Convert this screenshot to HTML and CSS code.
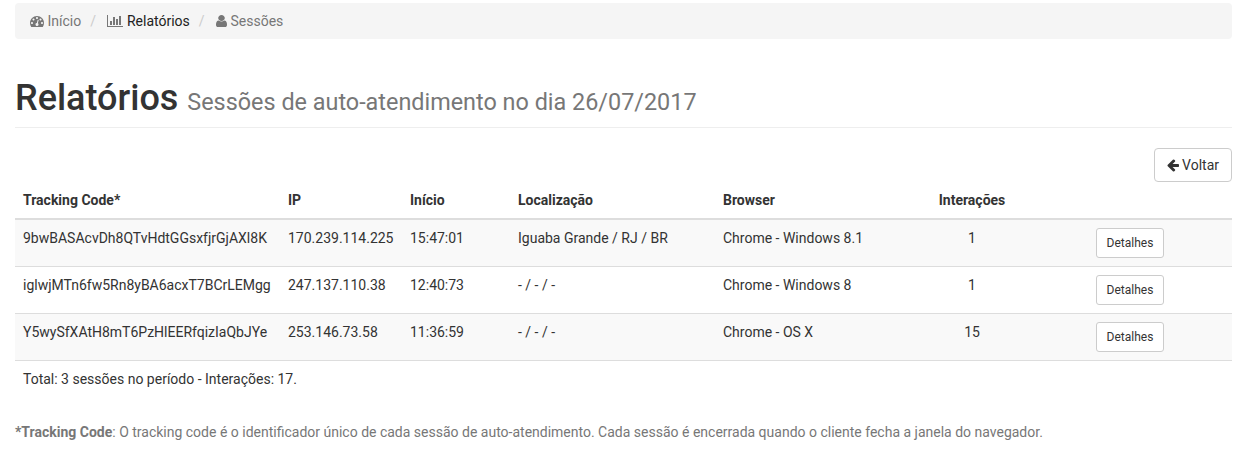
FILE: index.html
```html
<!DOCTYPE html>
<html lang="pt-BR">
<head>
    <meta charset="UTF-8">
    <meta name="viewport" content="width=device-width, initial-scale=1.0">
    <title>Relatórios - Sessões</title>
    <link rel="stylesheet" href="styles.css">
</head>
<body>
    <div class="container">
        <ol class="breadcrumb">
            <li><a href="#"><svg class="icon" width="14" height="14" viewBox="0 0 1792 1792"><path d="M384 1152q0-53-37.500-90.500t-90.500-37.500-90.500 37.500-37.500 90.500 37.500 90.500 90.500 37.500 90.500-37.500 37.500-90.500zm192-448q0-53-37.500-90.500t-90.500-37.500-90.500 37.500-37.500 90.500 37.500 90.500 90.500 37.500 90.500-37.500 37.500-90.500zm428 481l101-382q6-26-7.500-48.500t-38.500-29.500-48 6.500-30 39.500l-101 382q-60 5-107 43.500t-63 98.500q-20 77 20 146t117 89 146-20 89-117q16-60-6-117t-72-91zm660-33q0-53-37.500-90.500t-90.500-37.500-90.500 37.500-37.500 90.500 37.500 90.500 90.500 37.500 90.500-37.500 37.500-90.500zm-640-640q0-53-37.500-90.500t-90.500-37.500-90.500 37.500-37.500 90.500 37.500 90.500 90.500 37.500 90.500-37.500 37.500-90.500zm448 192q0-53-37.500-90.500t-90.500-37.500-90.500 37.500-37.500 90.500 37.500 90.500 90.500 37.500 90.500-37.500 37.500-90.500zm320 448q0 261-141 483-19 29-54 29h-1402q-35 0-54-29-141-221-141-483 0-182 71-348t191-286 286-191 348-71 348 71 286 191 191 286 71 348z"/></svg> Início</a></li>
            <li><svg class="icon" width="16" height="14" viewBox="0 0 2048 1792"><path d="M640 896v512h-256v-512h256zm384-512v1024h-256v-1024h256zm1024 1152v128h-2048v-1536h128v1408h1920zm-640-896v768h-256v-768h256zm384-384v1152h-256v-1152h256z"/></svg> <a href="#" class="current">Relatórios</a></li>
            <li><svg class="icon" width="11" height="14" viewBox="256 0 1280 1792" preserveAspectRatio="none"><path d="M1536 1399q0 109-62.500 187t-150.500 78h-854q-88 0-150.500-78t-62.500-187q0-85 8.500-160.500t31.500-152 58.500-131 94-89 134.500-34.500q131 128 313 128t313-128q76 0 134.500 34.500t94 89 58.500 131 31.500 152 8.500 160.500zm-256-887q0 159-112.500 271.500t-271.500 112.500-271.500-112.500-112.500-271.500 112.500-271.500 271.500-112.500 271.500 112.500 112.500 271.500z"/></svg> Sessões</li>
        </ol>

        <h1 class="page-header">Relatórios <small>Sessões de auto-atendimento no dia 26/07/2017</small></h1>

        <div class="toolbar">
            <a href="#" class="btn"><svg class="icon" width="12" height="14" viewBox="128 0 1536 1792"><path d="M1664 896v128q0 53-32.500 90.500t-84.500 37.500h-704l293 294q38 36 38 90t-38 90l-75 76q-37 37-90 37-52 0-91-37l-651-652q-37-37-37-90 0-52 37-91l651-650q38-38 91-38 52 0 90 38l75 74q38 38 38 91t-38 91l-293 293h704q52 0 84.500 37.500t32.500 90.500z"/></svg> Voltar</a>
        </div>

        <table class="table">
            <colgroup>
                <col class="col-code">
                <col class="col-ip">
                <col class="col-start">
                <col class="col-place">
                <col class="col-browser">
                <col class="col-count">
                <col class="col-actions">
            </colgroup>
            <thead>
                <tr>
                    <th>Tracking Code*</th>
                    <th>IP</th>
                    <th>Início</th>
                    <th>Localização</th>
                    <th>Browser</th>
                    <th class="text-center">Interações</th>
                    <th></th>
                </tr>
            </thead>
            <tbody>
                <tr>
                    <td>9bwBASAcvDh8QTvHdtGGsxfjrGjAXl8K</td>
                    <td>170.239.114.225</td>
                    <td>15:47:01</td>
                    <td>Iguaba Grande / RJ / BR</td>
                    <td>Chrome - Windows 8.1</td>
                    <td class="text-center">1</td>
                    <td><a href="#" class="btn btn-sm">Detalhes</a></td>
                </tr>
                <tr>
                    <td>iglwjMTn6fw5Rn8yBA6acxT7BCrLEMgg</td>
                    <td>247.137.110.38</td>
                    <td>12:40:73</td>
                    <td>- / - / -</td>
                    <td>Chrome - Windows 8</td>
                    <td class="text-center">1</td>
                    <td><a href="#" class="btn btn-sm">Detalhes</a></td>
                </tr>
                <tr>
                    <td>Y5wySfXAtH8mT6PzHlEERfqizIaQbJYe</td>
                    <td>253.146.73.58</td>
                    <td>11:36:59</td>
                    <td>- / - / -</td>
                    <td>Chrome - OS X</td>
                    <td class="text-center">15</td>
                    <td><a href="#" class="btn btn-sm">Detalhes</a></td>
                </tr>
            </tbody>
            <tfoot>
                <tr>
                    <td colspan="7">Total: 3 sessões no período - Interações: 17.</td>
                </tr>
            </tfoot>
        </table>

        <p class="note"><strong>*Tracking Code</strong>: O tracking code é o identificador único de cada sessão de auto-atendimento. Cada sessão é encerrada quando o cliente fecha a janela do navegador.</p>
    </div>
</body>
</html>
```
FILE: styles.css
```css
* {
    box-sizing: border-box;
}
body {
    margin: 0;
    font-family: Roboto, sans-serif;
    font-size: 14px;
    line-height: 20px;
    color: #333;
    background-color: #fff;
}
a {
    color: inherit;
    text-decoration: none;
}
.container {
    padding: 3px 18px 0 15px;
}
.icon {
    fill: currentColor;
    vertical-align: -2px;
}

/* breadcrumb */
.breadcrumb {
    display: flex;
    margin: 0;
    padding: 8px 15px;
    list-style: none;
    color: #777;
    background-color: #f5f5f5;
    border-radius: 4px;
}
.breadcrumb li + li::before {
    content: "/\00a0";
    padding: 0 8px 0 9px;
    color: #ccc;
}
.breadcrumb .current {
    color: #222;
}

.page-header {
    margin: 40px 0 20px;
    padding-bottom: 9px;
    border-bottom: 1px solid #eee;
    font-size: 36px;
    font-weight: 500;
    line-height: 39px;
}
.page-header small {
    font-size: 65%;
    font-weight: 400;
    line-height: 1;
    color: #777;
}

.toolbar {
    display: flex;
    justify-content: flex-end;
}
.btn {
    display: block;
    padding: 6px 12px;
    border: 1px solid #ccc;
    border-radius: 4px;
    background-color: #fff;
    white-space: nowrap;
}
.btn-sm {
    width: 68px;
    margin: 0 auto;
    padding: 5px 0;
    border-radius: 3px;
    font-size: 12px;
    line-height: 18px;
    text-align: center;
}

/* sessions table */
.table {
    width: 100%;
    table-layout: fixed;
    border-spacing: 0;
}
.table th,
.table td {
    padding: 8px;
    text-align: left;
    vertical-align: top;
}
.table th {
    border-bottom: 2px solid #ddd;
    font-weight: 700;
}
.table tbody td {
    border-bottom: 1px solid #ddd;
}
.table tbody tr:nth-child(odd) {
    background-color: #f9f9f9;
}
.table .text-center {
    text-align: center;
}
.col-code { width: 265px; }
.col-ip { width: 122px; }
.col-start { width: 108px; }
.col-place { width: 205px; }
.col-browser { width: 201px; }
.col-count { width: 112px; }
.col-actions { width: 204px; }

.note {
    margin: 25px 0 0;
    color: #777;
}
```
